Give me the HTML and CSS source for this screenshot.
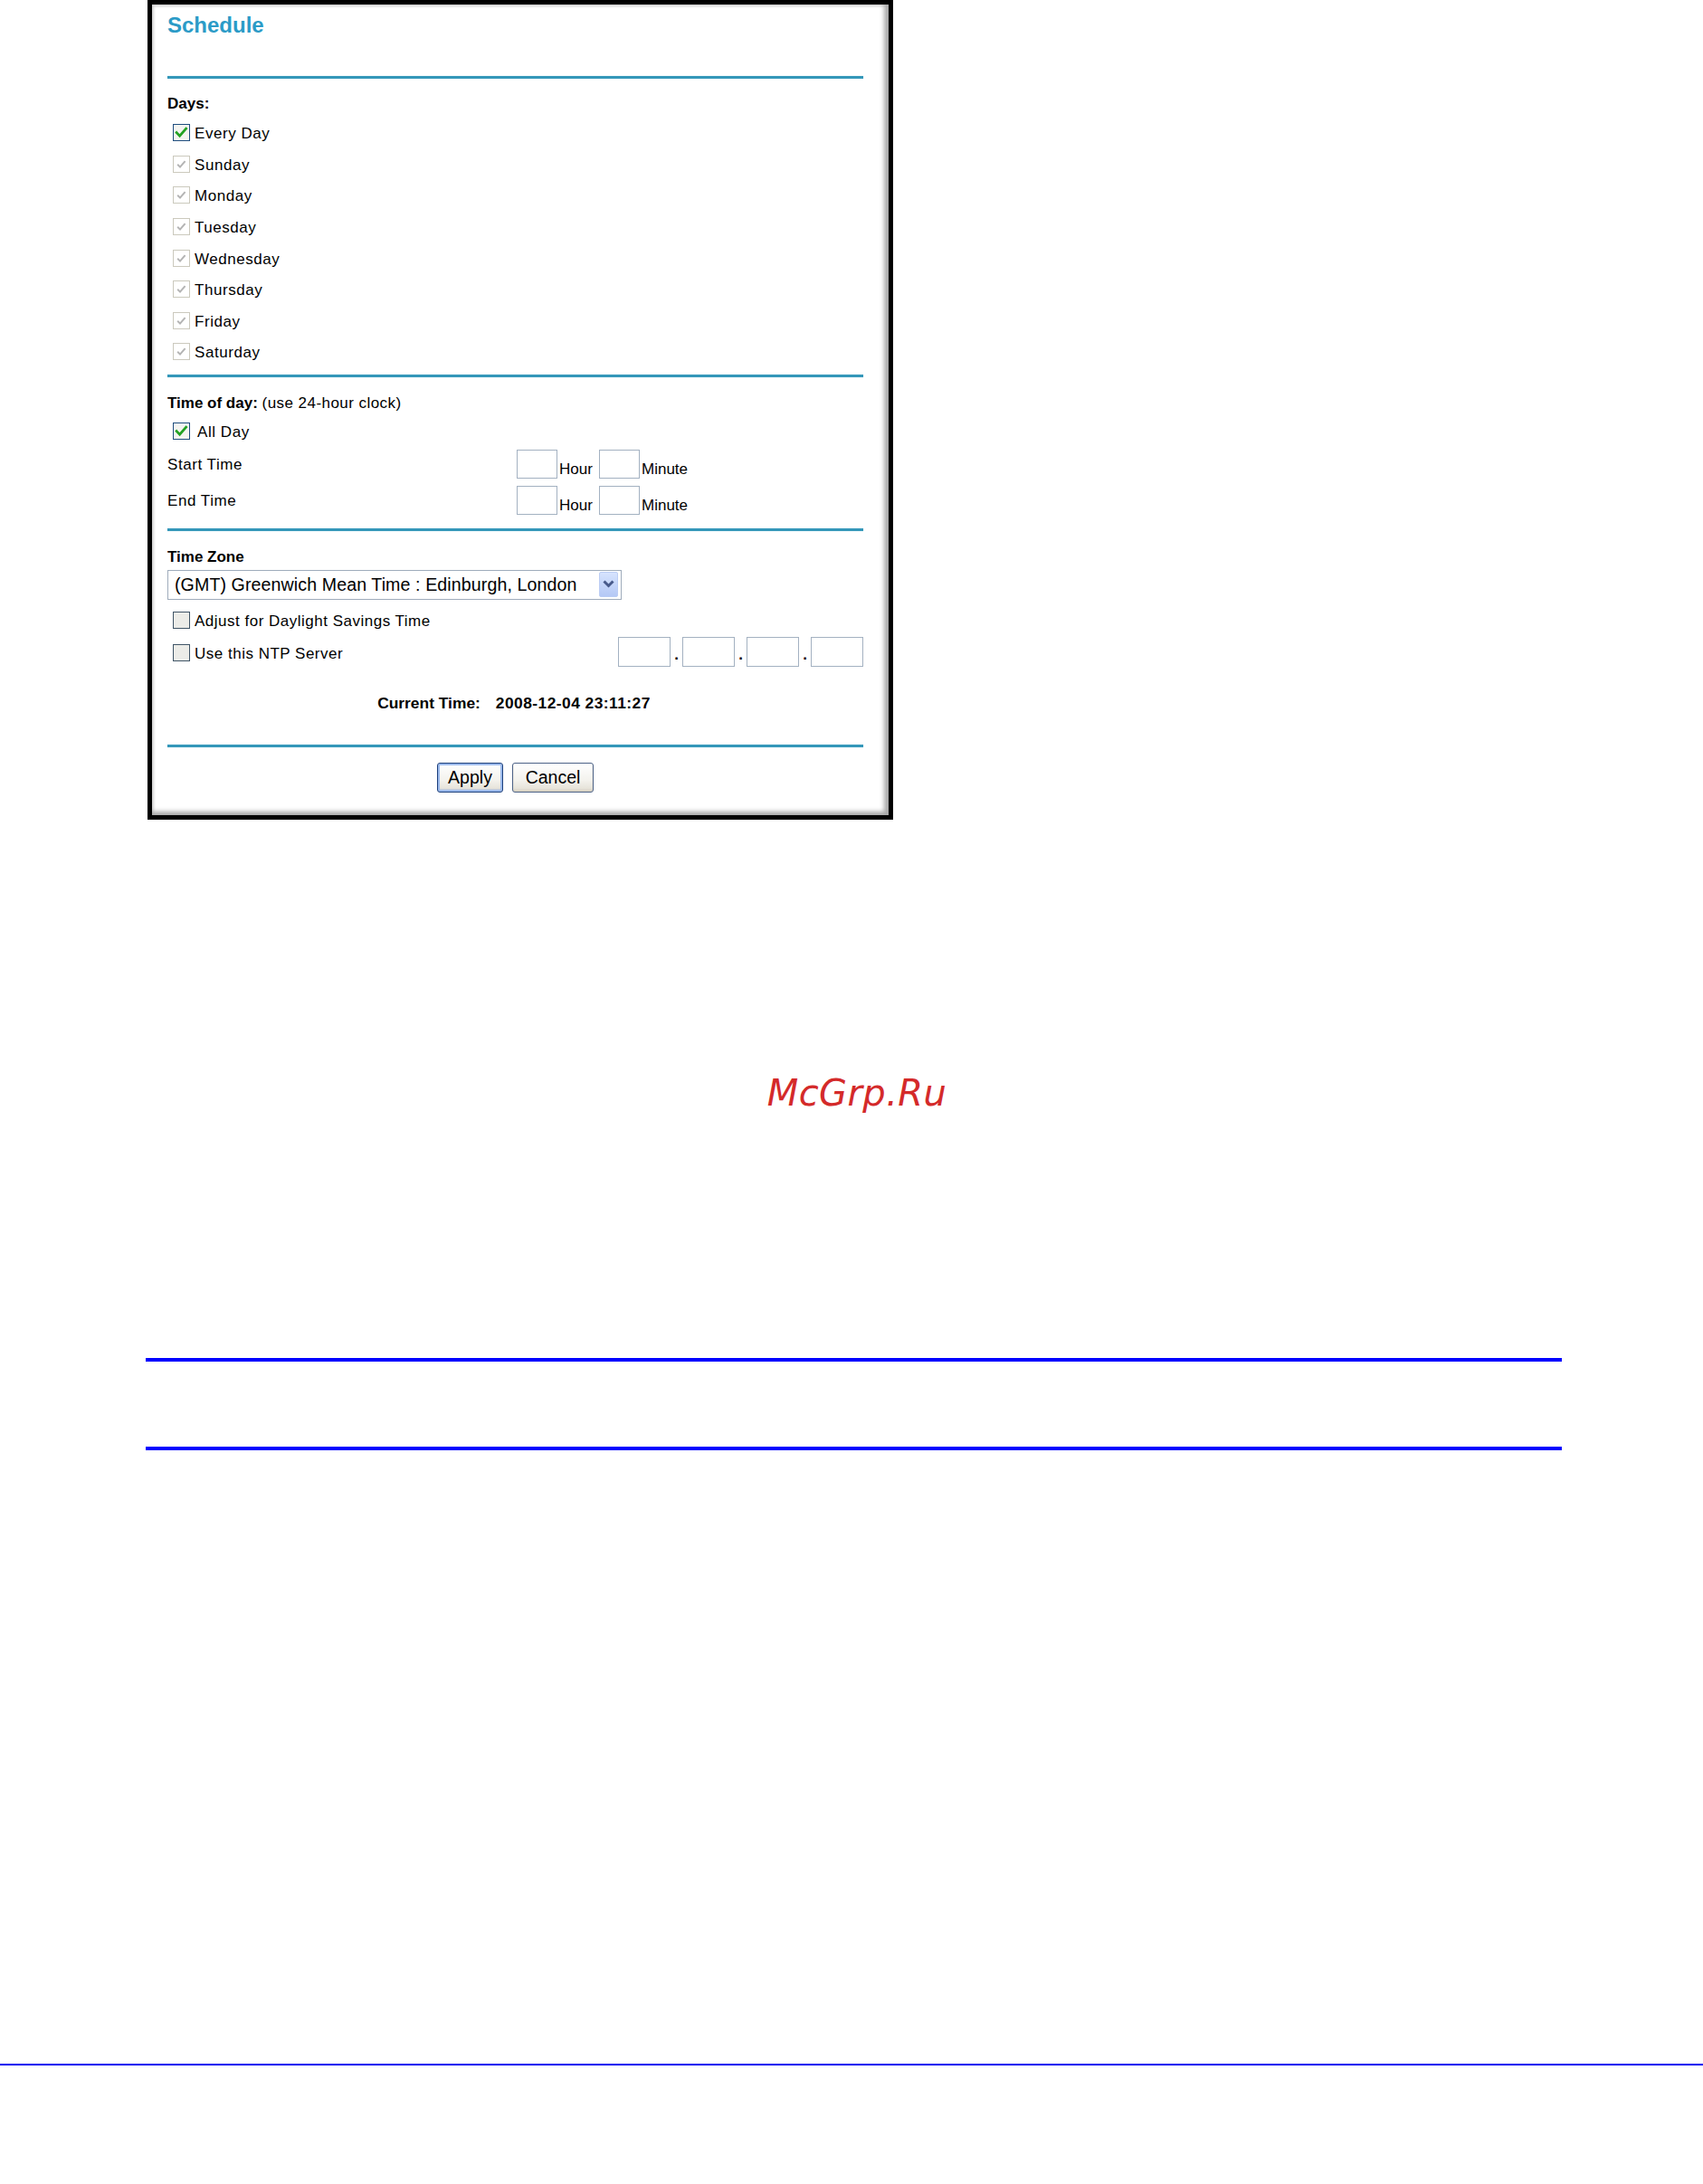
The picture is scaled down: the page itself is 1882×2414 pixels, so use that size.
FILE: index.html
```html
<!DOCTYPE html>
<html lang="en">
<head>
<meta charset="utf-8">
<title>Schedule</title>
<link rel="stylesheet" href="styles.css">
</head>
<body>
<div class="page">
  <div class="frame">
    <div class="title">Schedule</div>
    <div class="rule"></div>

    <div class="head days-head">Days:</div>
    <div class="days-list">
      <div class="cbrow"><svg class="cb on" viewBox="0 0 19 19"><rect class="box" x="0.5" y="0.5" width="18" height="18"/><path class="tick" d="M4.2 9.6 L7.6 13.2 L14.6 5.2"/></svg><span class="lbl">Every Day</span></div>
      <div class="cbrow"><svg class="cb dis" viewBox="0 0 19 19"><rect class="box" x="0.5" y="0.5" width="18" height="18"/><path class="tick" d="M5.2 9.8 L8 12.6 L13.6 6.2"/></svg><span class="lbl">Sunday</span></div>
      <div class="cbrow"><svg class="cb dis" viewBox="0 0 19 19"><rect class="box" x="0.5" y="0.5" width="18" height="18"/><path class="tick" d="M5.2 9.8 L8 12.6 L13.6 6.2"/></svg><span class="lbl">Monday</span></div>
      <div class="cbrow"><svg class="cb dis" viewBox="0 0 19 19"><rect class="box" x="0.5" y="0.5" width="18" height="18"/><path class="tick" d="M5.2 9.8 L8 12.6 L13.6 6.2"/></svg><span class="lbl">Tuesday</span></div>
      <div class="cbrow"><svg class="cb dis" viewBox="0 0 19 19"><rect class="box" x="0.5" y="0.5" width="18" height="18"/><path class="tick" d="M5.2 9.8 L8 12.6 L13.6 6.2"/></svg><span class="lbl">Wednesday</span></div>
      <div class="cbrow"><svg class="cb dis" viewBox="0 0 19 19"><rect class="box" x="0.5" y="0.5" width="18" height="18"/><path class="tick" d="M5.2 9.8 L8 12.6 L13.6 6.2"/></svg><span class="lbl">Thursday</span></div>
      <div class="cbrow"><svg class="cb dis" viewBox="0 0 19 19"><rect class="box" x="0.5" y="0.5" width="18" height="18"/><path class="tick" d="M5.2 9.8 L8 12.6 L13.6 6.2"/></svg><span class="lbl">Friday</span></div>
      <div class="cbrow"><svg class="cb dis" viewBox="0 0 19 19"><rect class="box" x="0.5" y="0.5" width="18" height="18"/><path class="tick" d="M5.2 9.8 L8 12.6 L13.6 6.2"/></svg><span class="lbl">Saturday</span></div>
    </div>

    <div class="rule r2"></div>

    <div class="head tod-head"><b>Time of day:</b> <span class="thin">(use 24-hour clock)</span></div>
    <div class="cbrow allday"><svg class="cb on" viewBox="0 0 19 19"><rect class="box" x="0.5" y="0.5" width="18" height="18"/><path class="tick" d="M4.2 9.6 L7.6 13.2 L14.6 5.2"/></svg><span class="lbl wide">All Day</span></div>
    <div class="timerow start">
      <span class="tlabel">Start Time</span>
      <span class="tbox"></span><span class="unit hour">Hour</span>
      <span class="tbox"></span><span class="unit">Minute</span>
    </div>
    <div class="timerow end">
      <span class="tlabel">End Time</span>
      <span class="tbox"></span><span class="unit hour">Hour</span>
      <span class="tbox"></span><span class="unit">Minute</span>
    </div>

    <div class="rule r3"></div>

    <div class="head tz-head"><b>Time Zone</b></div>
    <div class="select">
      <span class="seltext">(GMT) Greenwich Mean Time : Edinburgh, London</span>
      <span class="selbtn"><svg viewBox="0 0 21 28" width="21" height="28"><path d="M5.5 10.5 L10.5 15.5 L15.5 10.5" fill="none" stroke="#47598a" stroke-width="3"/></svg></span>
    </div>
    <div class="cbrow dst"><svg class="cb off" viewBox="0 0 19 19"><rect class="box" x="0.5" y="0.5" width="18" height="18"/></svg><span class="lbl">Adjust for Daylight Savings Time</span></div>
    <div class="ntprow">
      <svg class="cb off" viewBox="0 0 19 19"><rect class="box" x="0.5" y="0.5" width="18" height="18"/></svg><span class="lbl">Use this NTP Server</span>
      <div class="ipgroup">
        <span class="ipbox"></span><span class="dot">.</span>
        <span class="ipbox"></span><span class="dot">.</span>
        <span class="ipbox"></span><span class="dot">.</span>
        <span class="ipbox"></span>
      </div>
    </div>

    <div class="curtime"><b>Current Time:</b><b class="stamp">2008-12-04 23:11:27</b></div>

    <div class="rule r4"></div>

    <div class="buttons">
      <button class="btn apply" type="button">Apply</button>
      <button class="btn cancel" type="button">Cancel</button>
    </div>
  </div>

  <div class="watermark">McGrp.Ru</div>

  <div class="blueline first"></div>
  <div class="blueline second"></div>
  <div class="footline"></div>
</div>
</body>
</html>
```

FILE: styles.css
```css
html, body {
  margin: 0;
  padding: 0;
  background: #ffffff;
}

body {
  font-family: "Liberation Sans", Arial, sans-serif;
  color: #000;
}

.page {
  width: 1882px;
  height: 2414px;
  overflow: hidden;
}

/* ---------- screenshot frame ---------- */
.frame {
  margin-left: 163px;
  width: 824px;
  height: 906px;
  box-sizing: border-box;
  border: 5px solid #000;
  padding: 0 28px 0 17px;
  background: #fff;
  box-shadow:
    inset -7px -6px 5px -2px #a9a9a9,
    inset 3px 3px 3px -1px #cfcfcf;
  display: flex;
  flex-direction: column;
}

.title {
  height: 46px;
  line-height: 46px;
  font-size: 24px;
  font-weight: bold;
  color: #2b9bc7;
  margin-bottom: 33px;
}

.rule {
  height: 3px;
  background: #3497b9;
  box-shadow: 0 0 1px #8fd0e4;
  flex: 0 0 auto;
}

.r2 { margin-top: 7.5px; }
.r3 { margin-top: 15px; }
.r4 { margin-top: 32px; }

.head {
  height: 28px;
  line-height: 28px;
  font-size: 17px;
  padding-top: 1px;
  box-sizing: border-box;
}

.head .thin {
  letter-spacing: 0.45px;
}

.days-head {
  margin-top: 13px;
  font-weight: bold;
}

.days-list {
  margin-top: 1.5px;
}

.tod-head { margin-top: 14px; }
.tz-head { margin-top: 14px; }

.cbrow {
  height: 34.6px;
  display: flex;
  align-items: center;
  font-size: 17px;
}

/* ---------- checkboxes ---------- */
.cb {
  width: 19px;
  height: 19px;
  flex: 0 0 19px;
  margin-left: 6px;
}

.cb .box {
  stroke-width: 1;
}

.cb.on .box {
  fill: #f4f4f0;
  stroke: #1f4d7e;
}

.cb.on .tick {
  fill: none;
  stroke: #22a122;
  stroke-width: 2.8;
  stroke-linecap: square;
}

.cb.dis .box {
  fill: #ffffff;
  stroke: #cbc9bd;
}

.cb.dis .tick {
  fill: none;
  stroke: #b4b4b4;
  stroke-width: 2;
}

.cb.off .box {
  fill: #ecece8;
  stroke: #3f5466;
}

.dst .cb,
.ntprow .cb {
  margin-top: 3px;
}

.lbl {
  margin-left: 5px;
  line-height: 20px;
  padding-top: 3px;
  letter-spacing: 0.55px;
}

.dst .lbl,
.ntprow .lbl {
  padding-top: 6px;
  letter-spacing: 0.5px;
}

.lbl.wide { margin-left: 8px; }

.allday {
  height: 34px;
  margin-top: 1px;
}

/* ---------- time rows ---------- */
.timerow {
  height: 32px;
  display: flex;
  align-items: flex-end;
  font-size: 17px;
}

.timerow.start { margin-top: 3px; }
.timerow.end { margin-top: 8px; }

.tlabel {
  flex: 0 0 386px;
  align-self: center;
  line-height: 20px;
  padding-top: 3px;
  letter-spacing: 0.55px;
}

.tbox {
  width: 45px;
  height: 32px;
  box-sizing: border-box;
  border: 1px solid #a3b1c1;
  background: #fff;
}

.unit {
  line-height: 20px;
  margin-left: 2px;
}

.unit.hour {
  width: 39px;
  margin-right: 5px;
}

/* ---------- time zone select ---------- */
.select {
  margin-top: 1px;
  width: 502px;
  height: 33px;
  box-sizing: border-box;
  border: 1px solid #9facbb;
  background: #fff;
  display: flex;
  align-items: center;
}

.seltext {
  padding-left: 7px;
  font-size: 19.6px;
  white-space: nowrap;
  letter-spacing: 0.1px;
}

.selbtn {
  margin-left: auto;
  margin-right: 3px;
  width: 21px;
  height: 28px;
  box-sizing: border-box;
  border: 1px solid #bccdf4;
  border-radius: 2px;
  background: linear-gradient(#d6e3fe, #b4c8f5);
  display: flex;
}

.selbtn svg {
  display: block;
  margin: -1px;
}

.dst {
  height: 34px;
  margin-top: 4px;
}

/* ---------- NTP row ---------- */
.ntprow {
  margin-top: 3px;
  height: 33px;
  display: flex;
  align-items: center;
  font-size: 17px;
}

.ipgroup {
  margin-left: auto;
  display: flex;
  align-items: flex-end;
  height: 33px;
}

.ipbox {
  width: 58px;
  height: 33px;
  box-sizing: border-box;
  border: 1px solid #a3b1c1;
  background: #fff;
}

.dot {
  width: 13px;
  text-align: center;
  font-weight: bold;
  line-height: 20px;
  margin-bottom: 3px;
}

/* ---------- current time ---------- */
.curtime {
  margin-top: 26px;
  height: 28px;
  line-height: 28px;
  font-size: 17.4px;
  display: flex;
  justify-content: center;
  padding-right: 3px;
}

.stamp {
  margin-left: 17px;
  letter-spacing: 0.45px;
}

/* ---------- buttons ---------- */
.buttons {
  margin-top: 17px;
  height: 33px;
  display: flex;
  justify-content: center;
  gap: 10px;
}

.btn {
  height: 33px;
  box-sizing: border-box;
  margin: 0;
  padding: 0;
  font-family: "Liberation Sans", Arial, sans-serif;
  font-size: 19.5px;
  color: #000;
  border-radius: 3px;
  background: linear-gradient(#ffffff, #f3f2ed 60%, #e2ded3);
  line-height: 29px;
}

.btn.apply {
  width: 73px;
  border: 1px solid #1b3f7c;
  box-shadow: inset 0 0 0 2px #9dbbec, inset 0 -2px 2px #8aa9e0;
}

.btn.cancel {
  width: 90px;
  border: 1px solid #4c6286;
  box-shadow: inset 0 -2px 2px #d8d2c4;
}

/* ---------- lower page ---------- */
.watermark {
  margin-top: 282px;
  height: 40px;
  line-height: 40px;
  font-family: "DejaVu Sans", Verdana, sans-serif;
  font-style: italic;
  font-size: 40px;
  letter-spacing: 0.4px;
  color: #d42a2a;
  text-align: center;
  padding-left: 12px;
}

.blueline {
  margin-left: 161px;
  width: 1565px;
  height: 4px;
  background: #0000ff;
}

.blueline.first { margin-top: 273px; }
.blueline.second { margin-top: 94px; }

.footline {
  margin-top: 678px;
  height: 2px;
  background: #0000f0;
}
```
